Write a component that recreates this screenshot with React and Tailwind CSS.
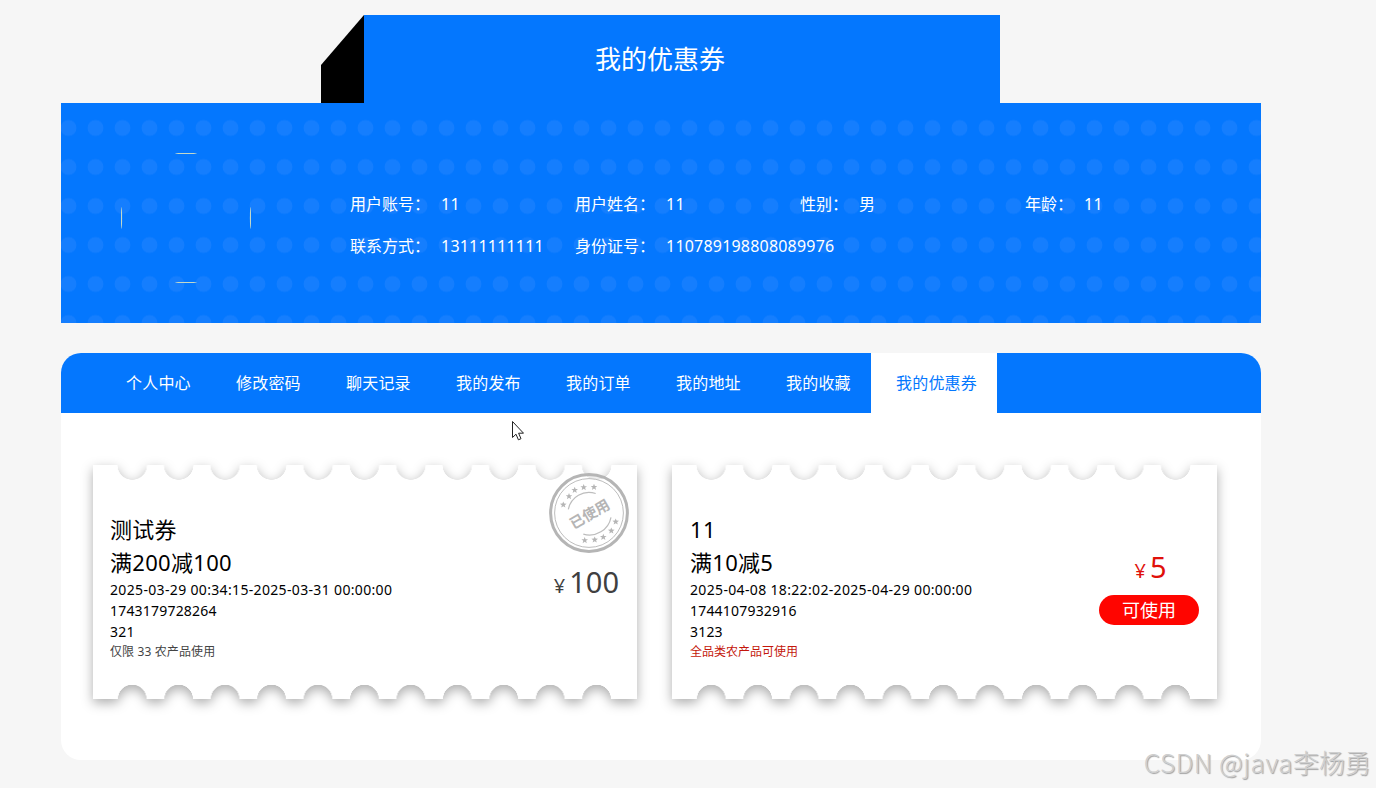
const tabs = ['个人中心', '修改密码', '聊天记录', '我的发布', '我的订单', '我的地址', '我的收藏', '我的优惠券'];

const profile = [
  { label: '用户账号', value: '11' },
  { label: '用户姓名', value: '11' },
  { label: '性别', value: '男' },
  { label: '年龄', value: '11' },
  { label: '联系方式', value: '13111111111' },
  { label: '身份证号', value: '110789198808089976' },
];

const coupons = [
  {
    name: '测试券',
    rule: '满200减100',
    period: '2025-03-29 00:34:15-2025-03-31 00:00:00',
    code: '1743179728264',
    remark: '321',
    scope: '仅限 33 农产品使用',
    amount: 100,
    used: true,
  },
  {
    name: '11',
    rule: '满10减5',
    period: '2025-04-08 18:22:02-2025-04-29 00:00:00',
    code: '1744107932916',
    remark: '3123',
    scope: '全品类农产品可使用',
    amount: 5,
    used: false,
  },
];

const stars = [
  [-25.7, -8.3], [-20, -16.7], [-14.3, -23], [-5.3, -25.7], [5, -26],
  [26.7, 8.7], [22.3, 17.7], [14.3, 24], [5.7, 26.7], [-4.3, 27.3],
];

function UsedStamp() {
  return (
    <svg viewBox="-40 -40 80 80" className="absolute right-2 top-2 w-20 h-20">
      <circle r="38.4" fill="none" stroke="#b5b5b5" strokeWidth="3" />
      <circle r="34.4" fill="none" stroke="#bdbdbd" strokeWidth="1" />
      <path d="M-20.7 -3.7A21 21 0 0 1 6.7 -19.5M22 4.3A22 22 0 0 1 -5.7 21.2" fill="none" stroke="#bdbdbd" strokeWidth="1.2" />
      {stars.map(([x, y]) => (
        <path
          key={`${x},${y}`}
          transform={`translate(${x} ${y})`}
          d="M0 -3.3L.9 -1.1L3.3 -1L1.4 .5L2.1 2.9L0 1.5L-2.1 2.9L-1.4 .5L-3.3 -1L-.9 -1.1Z"
          fill="#b5b5b5"
        />
      ))}
      <text
        transform="rotate(-30)"
        x="0"
        y="6.5"
        textAnchor="middle"
        fontSize="14.5"
        fontWeight="700"
        fill="#b5b5b5"
      >
        已使用
      </text>
    </svg>
  );
}

// White paper with round bites along the top and bottom edges
function TicketPaper() {
  return (
    <div className="absolute inset-0 flex drop-shadow-[0_4px_6px_rgba(0,0,0,0.32)]">
      <div className="w-4 bg-white" />
      <div className="w-[511px] flex flex-col">
        <div className="flex-1 bg-[radial-gradient(circle_at_50%_0,transparent_14.5px,white_15px)] bg-[length:46.45px_100%]" />
        <div className="flex-1 bg-[radial-gradient(circle_at_50%_100%,transparent_14px,white_14.5px)] bg-[length:46.45px_100%]" />
      </div>
      <div className="flex-1 bg-white" />
    </div>
  );
}

function Coupon({ coupon }) {
  return (
    <div className={`relative h-[234px] ${coupon.used ? 'w-[544px]' : 'w-[545px]'}`}>
      <TicketPaper />
      <div className={`relative h-full flex justify-between pr-[18px] ${coupon.used ? 'pl-[17px]' : 'pl-[18px]'}`}>
        <div className="pt-12 text-black">
          <div className="text-[22px] leading-[33px] tracking-[0.3px]">{coupon.name}</div>
          <div className="text-[22px] leading-[33px] tracking-[0.3px]">{coupon.rule}</div>
          <div className="text-[14px] leading-[21px] tracking-[0.2px]">
            <div className="tracking-[0.34px]">{coupon.period}</div>
            <div>{coupon.code}</div>
            <div>{coupon.remark}</div>
          </div>
          <div className={`mt-px text-[12px] leading-[18px] ${coupon.used ? 'tracking-[0.12px] text-[#444]' : 'text-[#c4170c]'}`}>{coupon.scope}</div>
        </div>
        <div className={`flex flex-col items-center ${coupon.used ? 'pt-[96px] text-[#404040]' : 'pt-[81px] text-[#e0100a]'}`}>
          <div className={`flex items-baseline gap-1 leading-[42px] ${coupon.used ? '' : 'pl-[3px]'}`}>
            <span className="text-[20px]">¥</span>
            <span className="text-[29px]">{coupon.amount}</span>
          </div>
          {!coupon.used && (
            <div className="mt-[3px] w-[100px] h-[30px] rounded-full bg-[#ff0500] text-white text-[18px] leading-[30px] text-center">
              可使用
            </div>
          )}
        </div>
      </div>
      {coupon.used && <UsedStamp />}
    </div>
  );
}

export default function App() {
  return (
    <div className="relative w-[1376px] h-[788px] overflow-hidden bg-[#f6f6f6] pt-[15px] pl-[61px] font-['Noto_Sans','Noto_Sans_CJK_SC',sans-serif]">
      <div className="w-[1200px]">
        {/* Page title */}
        <div className="relative mx-auto w-[680px] h-[88px] flex">
          <div className="w-[43px] bg-black [clip-path:polygon(100%_0,100%_100%,0_100%,0_50px)]" />
          <div className="w-[636px] bg-[#0477fe]" />
          <h1 className="absolute inset-0 pr-[2px] text-center text-white text-[26px] leading-[88px]">我的优惠券</h1>
        </div>

        {/* Profile */}
        <div className="h-[220px] flex bg-[#0477fe] bg-[radial-gradient(circle,#157efe_7.6px,transparent_8.2px)] bg-[length:27px_39px] bg-[position:-6px_5.5px]">
          <svg viewBox="0 0 130 130" className="shrink-0 w-[130px] h-[130px] ml-[60px] mt-[50px]" fill="#c3d8c8">
            <ellipse cx="65" cy=".5" rx="11" ry=".6" />
            <ellipse cx="65" cy="129.5" rx="11" ry=".6" />
            <ellipse cx=".5" cy="65" rx=".6" ry="11" />
            <ellipse cx="129.5" cy="65" rx=".6" ry="11" />
          </svg>
          <div className="ml-[99px] mt-20 w-[900px] h-[84px] shrink-0 grid grid-cols-4 text-white text-[16px] leading-[42px]">
            {profile.map((item) => (
              <div key={item.label} className="flex whitespace-nowrap">
                <span>{item.label}</span>
                <span>：</span>
                <span className="ml-[11px] tracking-[0.2px]">{item.value}</span>
              </div>
            ))}
          </div>
        </div>

        {/* Tabs + coupon list */}
        <div className="mt-[30px] h-[407px] rounded-[20px] overflow-hidden bg-white">
          <div className="h-[60px] flex bg-[#0477fe] pl-10 text-[16px] leading-[60px] text-white">
            {tabs.map((tab) => (
              <div
                key={tab}
                className={`tracking-[0.2px] pl-[25px] pr-5 ${tab === '我的优惠券' ? 'w-[126px] bg-white text-[#0477fe]' : 'w-[110px]'}`}
              >
                {tab}
              </div>
            ))}
          </div>
          <div className="flex gap-[35px] pt-[52px] pl-8">
            {coupons.map((coupon) => (
              <Coupon key={coupon.code} coupon={coupon} />
            ))}
          </div>
        </div>
      </div>

      {/* Mouse pointer */}
      <svg viewBox="0 0 12 20" className="absolute left-[512px] top-[421px] w-3 h-5">
        <path d="M.5 .5V16.5L4 13.2L6.4 18.8L9 17.7L6.6 12.2H11.5Z" fill="white" stroke="#222" />
      </svg>

      <div className="absolute right-[5px] bottom-[7px] text-[26px] leading-[38px] text-[#cfcfcf] font-['Noto_Sans_CJK_SC',sans-serif] font-light [text-shadow:1px_1px_1px_#a0a0a0]">
        <span className="tracking-[0.6px]">CSDN @java</span>李杨勇
      </div>
    </div>
  );
}
